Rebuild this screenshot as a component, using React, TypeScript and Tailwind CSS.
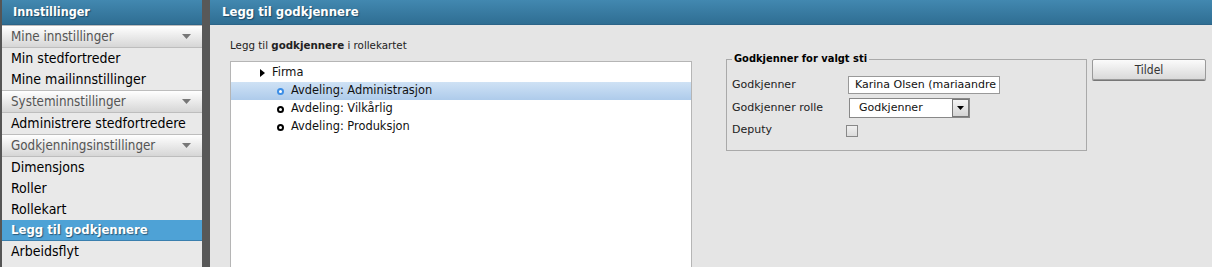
import React from "react";

const font = "font-['DejaVu_Sans_Condensed','DejaVu_Sans',sans-serif]";
const wide = "font-['DejaVu_Sans',sans-serif]";

type NavItem = { label: string; kind: "section" | "item" | "active" };

const navItems: NavItem[] = [
  { label: "Mine innstillinger", kind: "section" },
  { label: "Min stedfortreder", kind: "item" },
  { label: "Mine mailinnstillinger", kind: "item" },
  { label: "Systeminnstillinger", kind: "section" },
  { label: "Administrere stedfortredere", kind: "item" },
  { label: "Godkjenningsinstillinger", kind: "section" },
  { label: "Dimensjons", kind: "item" },
  { label: "Roller", kind: "item" },
  { label: "Rollekart", kind: "item" },
  { label: "Legg til godkjennere", kind: "active" },
  { label: "Arbeidsflyt", kind: "item" },
];

const treeNodes = [
  { label: "Avdeling: Administrasjon", selected: true },
  { label: "Avdeling: Vilkårlig", selected: false },
  { label: "Avdeling: Produksjon", selected: false },
];

const Caret = () => (
  <svg width="9" height="5" viewBox="0 0 9 5">
    <path d="M0 0h9L4.5 5z" fill="#777" />
  </svg>
);

const NavRow = ({ item }: { item: NavItem }) => {
  if (item.kind === "section") {
    return (
      <div className="flex h-[23px] items-center justify-between border-t border-b border-[#bdbdbd] bg-gradient-to-b from-white to-[#d6d6d6] pl-[9px] pr-[11px] text-[13.3px] text-[#555]">
        <span>{item.label}</span>
        <Caret />
      </div>
    );
  }
  if (item.kind === "active") {
    return (
      <div className="flex h-[21px] items-center border-b border-[#3a7fae] bg-[#4ea2d6] pl-[9px] text-[13px] font-bold text-white [text-shadow:1px_1px_1px_#2a5a7a]">
        {item.label}
      </div>
    );
  }
  return (
    <div className="flex h-[21px] items-center pl-[9px] text-[14px] text-black">
      {item.label}
    </div>
  );
};

const Radio = ({ selected }: { selected: boolean }) => (
  <span
    className={
      selected
        ? "inline-block h-[7px] w-[7px] rounded-full border-2 border-[#3c8ee6] bg-white"
        : "inline-block h-[7px] w-[7px] rounded-full border-2 border-black bg-white"
    }
  />
);

export default function App() {
  return (
    <div className={`${font} flex h-[267px] w-[1212px] overflow-hidden bg-[#e5e5e5]`}>
      {/* sidebar */}
      <aside className="flex w-[202px] shrink-0 flex-col border-l-2 border-[#555] bg-[#e9e9e9]">
        <div className="flex h-[25px] shrink-0 items-center border-b border-[#2c6488] bg-gradient-to-b from-[#4288b0] to-[#2f6e93] pl-[11px] text-[12.5px] font-bold text-white [text-shadow:1px_1px_1px_#1f4a66]">
          Innstillinger
        </div>
        {navItems.map((item) => (
          <NavRow key={item.label} item={item} />
        ))}
      </aside>

      <div className="w-[8px] shrink-0 bg-[#585858]" />

      {/* main */}
      <main className="flex min-w-0 flex-1 flex-col">
        <div className="flex h-[25px] shrink-0 items-center border-b border-[#2c6488] bg-gradient-to-b from-[#4288b0] to-[#2f6e93] pl-[12px] text-[13px] font-bold text-white [text-shadow:1px_1px_1px_#1f4a66]">
          Legg til godkjennere
        </div>

        <div className="flex flex-1 flex-col pl-[20px] pt-[12px]">
          <p className={`${wide} text-[10.3px] leading-[16px] text-[#222]`}>
            Legg til <b>godkjennere</b> i rollekartet
          </p>

          <div className="mt-[8px] flex flex-1 items-start">
            {/* tree */}
            <div className={`${wide} h-[220px] w-[462px] shrink-0 border border-[#b5b5b5] bg-white pt-[2px] text-[11.4px] text-[#111]`}>
              <div className="flex h-[18px] items-center pl-[29px]">
                <svg width="5" height="8" viewBox="0 0 5 8" className="mr-[7px]">
                  <path d="M0 0l5 4-5 4z" fill="#000" />
                </svg>
                Firma
              </div>
              {treeNodes.map((n) => (
                <div
                  key={n.label}
                  className={
                    n.selected
                      ? "flex h-[18px] items-center bg-gradient-to-b from-[#cfe2f5] to-[#aecbeb] pl-[46px]"
                      : "flex h-[18px] items-center pl-[46px]"
                  }
                >
                  <Radio selected={n.selected} />
                  <span className="ml-[7px]">{n.label}</span>
                </div>
              ))}
            </div>

            {/* fieldset */}
            <fieldset className={`${wide} -mt-[10px] ml-[34px] w-[361px] shrink-0 border border-[#a9a9a9] px-[5px] pb-[8px] pt-[6px] text-[11px] text-[#222]`}>
              <legend className={`${font} px-[2px] text-[11px] font-bold text-black`}>
                Godkjenner for valgt sti
              </legend>
              <div className="flex h-[23px] items-center">
                <span className="w-[116px]">Godkjenner</span>
                <div className="flex h-[18px] w-[152px] items-center overflow-hidden whitespace-nowrap border border-[#999] bg-white pl-[6px] text-[11px] text-[#111]">
                  Karina Olsen (mariaandre
                </div>
              </div>
              <div className="flex h-[23px] items-center">
                <span className="w-[117px]">Godkjenner rolle</span>
                <div className="flex h-[20px] w-[121px] items-center justify-between border border-[#888] bg-white pl-[9px] text-[11px] text-[#111]">
                  <span>Godkjenner</span>
                  <span className="flex h-[18px] w-[17px] items-center justify-center border border-[#777] bg-gradient-to-b from-[#f4f4f4] to-[#d4d4d4]">
                    <svg width="7" height="4" viewBox="0 0 7 4">
                      <path d="M0 0h7L3.5 4z" fill="#000" />
                    </svg>
                  </span>
                </div>
              </div>
              <div className="flex h-[22px] items-center">
                <span className="w-[114px]">Deputy</span>
                <span className="inline-block h-[12px] w-[12px] border border-[#888] bg-gradient-to-b from-[#f0f0f0] to-[#dcdcdc]" />
              </div>
            </fieldset>

            <button className="-mt-[2px] ml-[5px] h-[21px] w-[114px] rounded-[2px] border border-[#9a9a9a] bg-gradient-to-b from-[#fbfbfb] to-[#d9d9d9] text-[12px] text-[#333] shadow-[0_1px_0_#777]">
              Tildel
            </button>
          </div>
        </div>
      </main>
    </div>
  );
}
